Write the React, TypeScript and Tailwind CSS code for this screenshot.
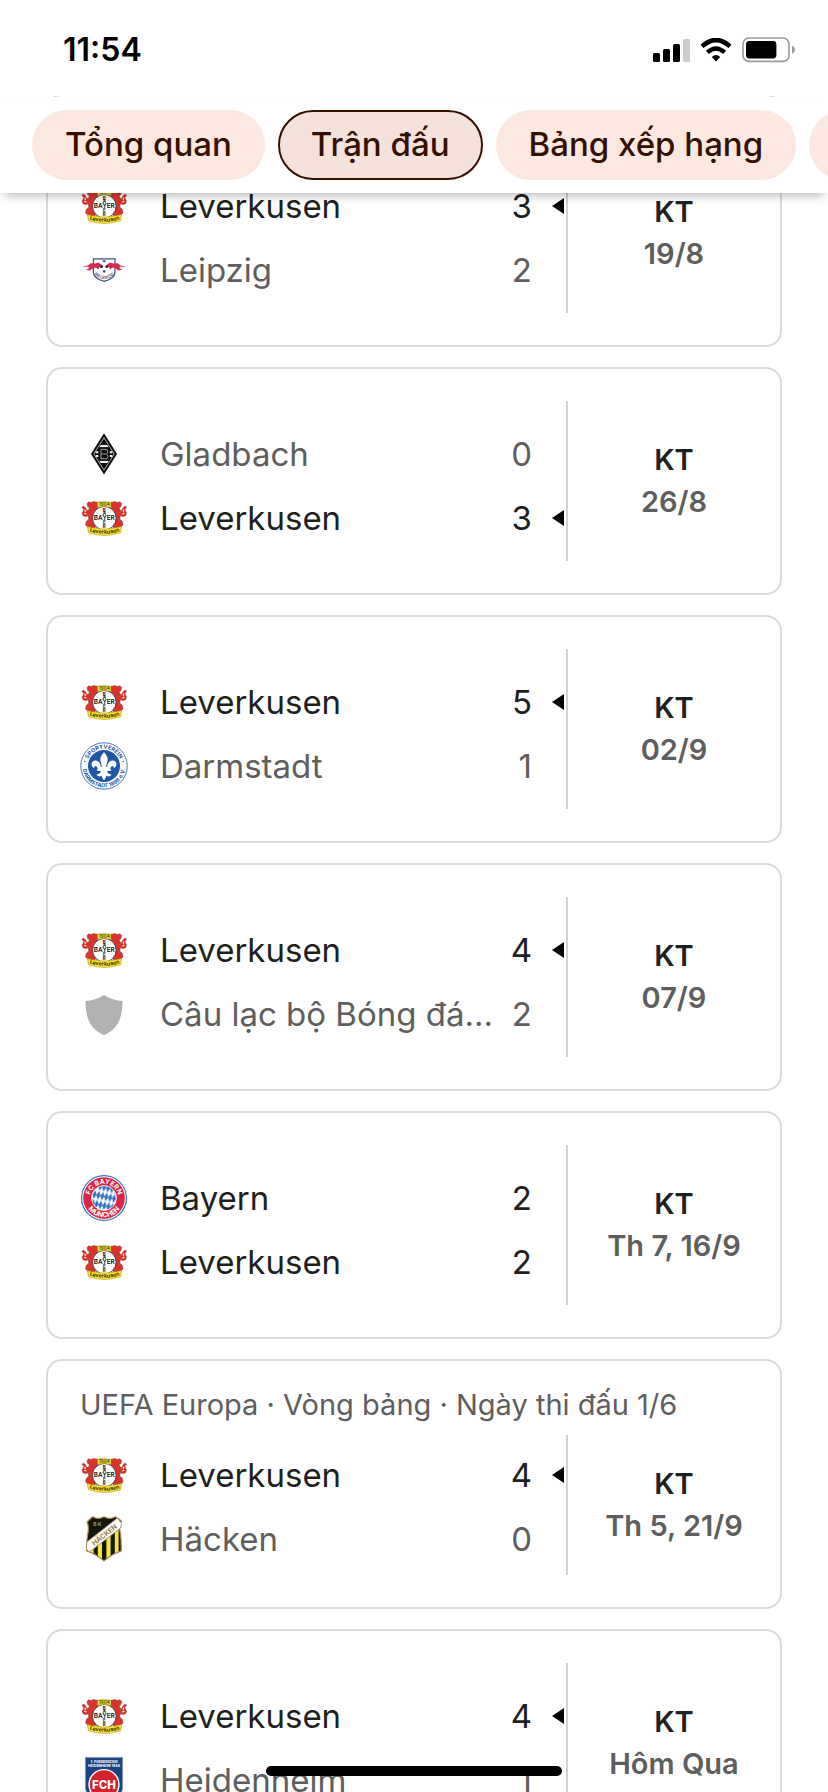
import type { ReactNode } from 'react';
import clsx from 'clsx';

type TeamId = 'leverkusen' | 'leipzig' | 'gladbach' | 'darmstadt' | 'generic' | 'bayern' | 'hacken' | 'heidenheim';

interface Side {
  team: TeamId;
  name: string;
  score: number;
}

interface Match {
  id: string;
  stage?: string;
  date: string;
  sides: [Side, Side];
}

const leverkusen = (score: number): Side => ({ team: 'leverkusen', name: 'Leverkusen', score });

const matches: Match[] = [
  { id: 'm1', date: '19/8', sides: [leverkusen(3), { team: 'leipzig', name: 'Leipzig', score: 2 }] },
  { id: 'm2', date: '26/8', sides: [{ team: 'gladbach', name: 'Gladbach', score: 0 }, leverkusen(3)] },
  { id: 'm3', date: '02/9', sides: [leverkusen(5), { team: 'darmstadt', name: 'Darmstadt', score: 1 }] },
  { id: 'm4', date: '07/9', sides: [leverkusen(4), { team: 'generic', name: 'Câu lạc bộ Bóng đá...', score: 2 }] },
  { id: 'm5', date: 'Th 7, 16/9', sides: [{ team: 'bayern', name: 'Bayern', score: 2 }, leverkusen(2)] },
  {
    id: 'm6',
    stage: 'UEFA Europa · Vòng bảng · Ngày thi đấu 1/6',
    date: 'Th 5, 21/9',
    sides: [leverkusen(4), { team: 'hacken', name: 'Häcken', score: 0 }],
  },
  { id: 'm7', date: 'Hôm Qua', sides: [leverkusen(4), { team: 'heidenheim', name: 'Heidenheim', score: 1 }] },
];

const tabs = [
  { label: 'Tổng quan', selected: false },
  { label: 'Trận đấu', selected: true },
  { label: 'Bảng xếp hạng', selected: false },
];

function Crest({ children }: { children: ReactNode }) {
  return (
    <svg viewBox="0 0 48 48" className="size-12 shrink-0" fontFamily="Inter, sans-serif" aria-hidden="true">
      {children}
    </svg>
  );
}

function LeverkusenCrest() {
  const lion = 'M17.5 8.2 L13 7.4 L11.5 8.6 L8.6 7.8 L7 9.6 L7.6 12.6 L9.4 13.8 L8.4 16.2 L6.6 16.4 L5.6 13.8 L3.4 12 L1.8 13.6 L3.6 14.8 L3.2 17 L2 19 L3.2 22 L6 22.6 L8.2 21.8 L8.8 25 L6.2 27.4 L5.6 31 L8.4 33.4 L14 34 L18 32 L14 27 L13 22 L15 17 L18 14 Z';
  return (
    <Crest>
      <g fill="#d9342b" stroke="#7a2a26" strokeWidth="0.4">
        <path d={lion} />
        <path d={lion} transform="translate(48.6 0) scale(-1 1)" />
      </g>
      <path d="M4.2 19.2 L6.4 20 M4.8 15.6 L5.4 18 M44.4 19.2 L42.2 20 M43.8 15.6 L43.2 18" stroke="#fff" strokeWidth="1.1" />
      <circle cx="24.3" cy="24.2" r="11.8" fill="#fff" stroke="#222" strokeWidth="0.8" />
      <text x="24.3" y="26.2" fontSize="6.4" fontWeight="600" textAnchor="middle" fill="#111">BAYER</text>
      <g fontSize="4.4" fontWeight="700" textAnchor="middle" fill="#111">
        <text x="24.3" y="17.8">B</text>
        <text x="24.3" y="21.4">A</text>
        <text x="24.3" y="30.4">E</text>
        <text x="24.3" y="34.4">R</text>
      </g>
      <path d="M17.6 8.2 Q24 6.6 30.8 8.2 L31.2 13.2 Q24.3 12 17.4 13.2 Z" fill="#f7e22c" stroke="#8a7818" strokeWidth="0.4" />
      <text x="24.3" y="12" fontSize="4.6" fontWeight="600" textAnchor="middle" fill="#4a4008">1904</text>
      <path d="M7.4 32.6 Q24.3 37.4 41.4 32.6 L40.8 38.8 Q24.3 44.2 8.4 38.8 Z" fill="#f7e22c" stroke="#8a7818" strokeWidth="0.4" />
      <path id="lev-ribbon" d="M8.6 37 Q24.3 42.4 40.6 37" fill="none" />
      <text fontSize="5.4" fontWeight="700" fill="#3a3200" textAnchor="middle">
        <textPath href="#lev-ribbon" startOffset="50%">Leverkusen</textPath>
      </text>
    </Crest>
  );
}

function LeipzigCrest() {
  const bull = 'M1.6 20.4 L8 19.6 L10.6 17.2 L15 17.6 L18.4 16.4 L21.4 18.4 L22.2 22 L19.4 21 L18.2 23.6 L15.8 21.6 L12.6 22.4 L10 24.4 L6 23.8 L9 22.2 L8.4 20.8 Z';
  return (
    <Crest>
      <path d="M13.4 12.8 H35 V26.4 Q34.6 32.6 24.2 35.4 Q13.8 32.6 13.4 26.4 Z" fill="#fff" stroke="#3f5378" strokeWidth="1.2" />
      <path d="M22 14.6 L26.4 14.6 L24.2 16.4 Z M22.4 24.4 L26 24.4 L24.2 27 Z" fill="#22365e" />
      <g fill="#d52b50">
        <path d={bull} />
        <path d={bull} transform="translate(48.4 0) scale(-1 1)" />
      </g>
      <circle cx="21.6" cy="20.4" r="1.5" fill="#22365e" />
      <circle cx="26.8" cy="20.4" r="1.5" fill="#22365e" />
      <path id="rb-arc" d="M15 29 Q24.2 37 33.6 29" fill="none" />
      <text fontSize="4.2" fontWeight="600" fill="#3f5378" textAnchor="middle">
        <textPath href="#rb-arc" startOffset="50%">RB LEIPZIG</textPath>
      </text>
    </Crest>
  );
}

function GladbachCrest() {
  return (
    <Crest>
      <path d="M24 3.2 L37 24 L24 44.6 L11 24 Z" fill="#0b0b0b" />
      <path d="M24 7.8 L34.2 24 L24 40 L13.8 24 Z" fill="none" stroke="#dcdcdc" strokeWidth="0.8" />
      <path d="M20.8 15 H27.2 L28.8 17.2 H19.2 Z M20.8 33 H27.2 L28.8 30.8 H19.2 Z M15.6 21.2 H18.6 V23.2 H15.6 Z M15.6 25 H18.6 V27 H15.6 Z M29.6 21.2 H32.4 V23.2 H29.6 Z M29.6 25 H32.4 V27 H29.6 Z" fill="#f4f4f4" />
      <rect x="18.6" y="17.4" width="11" height="13.4" fill="#0b0b0b" />
      <path d="M21 19.4 H26 Q27.8 19.4 27.8 21.6 Q27.8 23.6 26.4 24 Q28 24.4 28 26.4 Q28 28.8 26 28.8 H21 Z M21 24 H26" fill="none" stroke="#a8a8a8" strokeWidth="0.9" />
    </Crest>
  );
}

function DarmstadtCrest() {
  return (
    <Crest>
      <circle cx="24" cy="24" r="23.2" fill="#fff" stroke="#1f57a8" strokeWidth="0.8" />
      <circle cx="24" cy="24" r="16" fill="#1f57a8" />
      <path d="M24 10 C27 13.6 28 16 27.6 18.6 C27.3 20.6 26.4 22.4 26.2 25 H27.2 C27.4 20.6 30.4 17.6 34 18.8 C37.4 20 37.2 25 33.8 26.2 C34 23.6 31.4 22.6 30 27.2 H31 V29 H27 C27.8 31.4 29.4 32.4 31.4 32.2 C30.4 34.8 27.8 35 26.4 33.4 C26 35.6 25 37 24 38.4 C23 37 22 35.6 21.6 33.4 C20.2 35 17.6 34.8 16.6 32.2 C18.6 32.4 20.2 31.4 21 29 H17 V27.2 H18 C16.6 22.6 14 23.6 14.2 26.2 C10.8 25 10.6 20 14 18.8 C17.6 17.6 20.6 20.6 20.8 25 H21.8 C21.6 22.4 20.7 20.6 20.4 18.6 C20 16 21 13.6 24 10 Z" fill="#fff" />
      <path id="sv-top" d="M6.7 24 A17.3 17.3 0 0 1 41.3 24" fill="none" />
      <path id="sv-bottom" d="M2.6 24 A21.4 21.4 0 0 0 45.4 24" fill="none" />
      <g fontWeight="700" fill="#1f57a8" textAnchor="middle">
        <text fontSize="5.6"><textPath href="#sv-top" startOffset="50%">SPORTVEREIN</textPath></text>
        <text fontSize="5.4"><textPath href="#sv-bottom" startOffset="50%">DARMSTADT 1898 e.V.</textPath></text>
      </g>
      <circle cx="4.8" cy="19.4" r="0.7" fill="#1f57a8" />
      <circle cx="43.2" cy="19.4" r="0.7" fill="#1f57a8" />
    </Crest>
  );
}

function BayernCrest() {
  return (
    <Crest>
      <defs>
        <pattern id="lozenge" width="4" height="9" patternUnits="userSpaceOnUse" patternTransform="rotate(12 24 24)">
          <rect width="4" height="9" fill="#fff" />
          <path d="M2 0 L4 4.5 L2 9 L0 4.5 Z" fill="#2b6fb8" />
        </pattern>
      </defs>
      <circle cx="24" cy="24" r="22.4" fill="#fff" stroke="#3a74bb" strokeWidth="1.2" />
      <circle cx="24" cy="24" r="20.8" fill="#dd2346" />
      <circle cx="24" cy="24" r="12.4" fill="url(#lozenge)" stroke="#fff" strokeWidth="0.8" />
      <path id="fcb-top" d="M9.8 24 A14.2 14.2 0 0 1 38.2 24" fill="none" />
      <path id="fcb-bottom" d="M4.8 24 A19.2 19.2 0 0 0 43.2 24" fill="none" />
      <g fontWeight="700" fill="#fff" textAnchor="middle">
        <text fontSize="6.8"><textPath href="#fcb-top" startOffset="50%">FC BAYERN</textPath></text>
        <text fontSize="7"><textPath href="#fcb-bottom" startOffset="50%">MÜNCHEN</textPath></text>
      </g>
    </Crest>
  );
}

function GenericCrest() {
  return (
    <Crest>
      <path d="M24 5 C30 8.6 36 10.6 42.4 11 C42.6 27 38.6 39 24 45 C9.4 39 5.4 27 5.6 11 C12 10.6 18 8.6 24 5 Z" fill="#b1b1b1" />
    </Crest>
  );
}

function HackenCrest() {
  const outline = 'M12.6 1.8 Q18 5 24 1.8 Q30 5 35.4 1.8 L41.4 6 Q38.6 12 40.4 18 Q41.4 26 41.2 36 Q32 39 24 46 Q16 39 6.8 36 Q6.4 26 7.8 19 Q9.4 12 7 7 Z';
  return (
    <Crest>
      <clipPath id="hacken-clip">
        <path d={outline} />
      </clipPath>
      <g clipPath="url(#hacken-clip)">
        <rect width="48" height="48" fill="#15150f" />
        <path d="M9.6 28 H13.6 V48 H9.6 Z M17.8 22 H22 V48 H17.8 Z M26.4 18 H30.6 V48 H26.4 Z M34.8 14 H38.6 V48 H34.8 Z" fill="#f4e63a" />
      </g>
      <path d={outline} fill="none" stroke="#a38a52" strokeWidth="1.2" />
      <path d="M6.8 27 L37.4 3 L41.6 8.4 L40.6 13 L9.4 37 L6.4 34 Z" fill="#fff" stroke="#a38a52" strokeWidth="0.9" />
      <text x="24.6" y="22.4" fontSize="7" fontWeight="700" textAnchor="middle" fill="#9a8047" transform="rotate(-38 24.4 20)">HÄCKEN</text>
      <text x="17.4" y="11.4" fontSize="4.8" fontWeight="600" textAnchor="middle" fill="#b8a468">B·K</text>
    </Crest>
  );
}

function HeidenheimCrest() {
  return (
    <Crest>
      <path d="M5.4 1.4 H42.6 V32 Q42 43 24 47 Q6 43 5.4 32 Z" fill="#1a4480" stroke="#8c9bb0" strokeWidth="0.6" />
      <g fontWeight="700" fill="#fff" textAnchor="middle">
        <text x="24" y="6.6" fontSize="3.8">1. Fussballclub</text>
        <text x="24" y="11" fontSize="3.6">HEIDENHEIM 1846</text>
      </g>
      <circle cx="24" cy="28.6" r="15" fill="#d3242d" stroke="#fff" strokeWidth="1.4" />
      <text x="24" y="33.4" fontSize="11.5" fontWeight="800" textAnchor="middle" fill="#fff">FCH</text>
    </Crest>
  );
}

const crests: Record<TeamId, () => ReactNode> = {
  leverkusen: LeverkusenCrest,
  leipzig: LeipzigCrest,
  gladbach: GladbachCrest,
  darmstadt: DarmstadtCrest,
  generic: GenericCrest,
  bayern: BayernCrest,
  hacken: HackenCrest,
  heidenheim: HeidenheimCrest,
};

function TeamRow({ side, opponent }: { side: Side; opponent: Side }) {
  const TeamCrest = crests[side.team];
  const won = side.score > opponent.score;
  const lost = side.score < opponent.score;

  return (
    <div className={clsx('flex h-16 items-center text-[33px] leading-[48px]', lost ? 'text-[#5e5e5e]' : 'text-[#1f1f1f]')}>
      <TeamCrest />
      <span className="ml-8 min-w-0 flex-1 truncate">{side.name}</span>
      <span>{side.score}</span>
      <span className="flex w-[34px] justify-end pr-0.5">
        {won && (
          <svg viewBox="0 0 12 16" className="h-4 w-3" aria-hidden="true">
            <path d="M12 0 V16 L0 8 Z" fill="#000" />
          </svg>
        )}
      </span>
    </div>
  );
}

function MatchCard({ match }: { match: Match }) {
  const [home, away] = match.sides;

  return (
    <article className={clsx('rounded-2xl border-2 border-[#dadae0] bg-white pb-8', !match.stage && 'pt-8')}>
      {match.stage && <p className="truncate px-8 pt-6 pb-[10px] text-[29px] leading-10 text-[#5e5e5e]">{match.stage}</p>}
      <div className="flex">
        <div className={clsx('min-w-0 flex-1 pl-8', match.stage ? 'pt-2 pb-1' : 'pt-[21px] pb-[11px]')}>
          <TeamRow side={home} opponent={away} />
          <TeamRow side={away} opponent={home} />
        </div>
        <div className="flex w-[214px] shrink-0 flex-col items-center justify-center border-l-2 border-[#d2d2d2] text-[29px] leading-[42px] font-semibold">
          <span className="text-[#1f1f1f]">KT</span>
          <span className="text-[#5e5e5e]">{match.date}</span>
        </div>
      </div>
    </article>
  );
}

function StatusBar() {
  return (
    <div className="flex h-24 items-start justify-between bg-white pt-[30px] pr-8 pl-[63px]">
      <span className="text-[32px] leading-10 font-semibold text-black">11:54</span>
      <div className="flex h-10 items-center gap-[10px]">
        <svg viewBox="0 0 37 24" className="h-6 w-[37px]" aria-hidden="true">
          <rect x="0" y="15" width="7" height="9" rx="1.5" />
          <rect x="10" y="11" width="7" height="13" rx="1.5" />
          <rect x="20" y="6" width="7" height="18" rx="1.5" />
          <rect x="30" y="1" width="7" height="23" rx="1.5" fill="#ccc" />
        </svg>
        <svg viewBox="0 0 32 24" className="h-6 w-8" aria-hidden="true">
          <path d="M2 8.4 Q16 -4.4 30 8.4" fill="none" stroke="#000" strokeWidth="4.6" />
          <path d="M7.4 14.4 Q16 6.6 24.6 14.4" fill="none" stroke="#000" strokeWidth="4.4" />
          <path d="M11.8 19 Q16 15.2 20.2 19 L16 23.6 Z" />
        </svg>
        <svg viewBox="0 0 54 26" className="h-[26px] w-[54px]" aria-hidden="true">
          <rect x="1" y="1" width="46" height="23.4" rx="6" fill="none" stroke="#9b9b9b" strokeWidth="1.6" />
          <rect x="4" y="4" width="30.4" height="17.4" rx="3.4" />
          <path d="M50 8.6 Q53 10 53 12.8 Q53 15.6 50 17 Z" fill="#9b9b9b" />
        </svg>
      </div>
    </div>
  );
}

export default function App() {
  return (
    <div className="relative h-screen overflow-hidden bg-white font-['Inter',sans-serif]">
      <header className="absolute inset-x-0 top-0 z-10">
        <StatusBar />
        <nav className="mt-px flex h-24 gap-[13px] overflow-hidden bg-white pt-[13px] pl-8 shadow-[0_6px_10px_-4px_rgba(0,0,0,0.3)]">
          {tabs.map((tab) => (
            <button
              key={tab.label}
              type="button"
              aria-pressed={tab.selected}
              className={clsx(
                'h-[70px] shrink-0 rounded-full border-2 px-[31px] text-[33px] font-medium whitespace-nowrap text-[#351000]',
                tab.selected ? 'border-[#351000] bg-[#f5e2dc]' : 'border-[#fbe8e1] bg-[#fbe8e1]',
              )}
            >
              {tab.label}
            </button>
          ))}
          <button type="button" aria-label="Thêm" className="h-[70px] w-40 shrink-0 rounded-full bg-[#fbe8e1]" />
        </nav>
      </header>

      <main className="flex flex-col gap-5 px-[46px]">
        {/* tail of the card scrolled under the header */}
        <div className="h-[99px] shrink-0 rounded-b-2xl border-2 border-t-0 border-[#dadae0]" />
        {matches.map((match) => (
          <MatchCard key={match.id} match={match} />
        ))}
      </main>

      <div className="absolute bottom-4 left-1/2 z-20 h-[10px] w-[296px] -translate-x-1/2 rounded-full bg-black" />
    </div>
  );
}
